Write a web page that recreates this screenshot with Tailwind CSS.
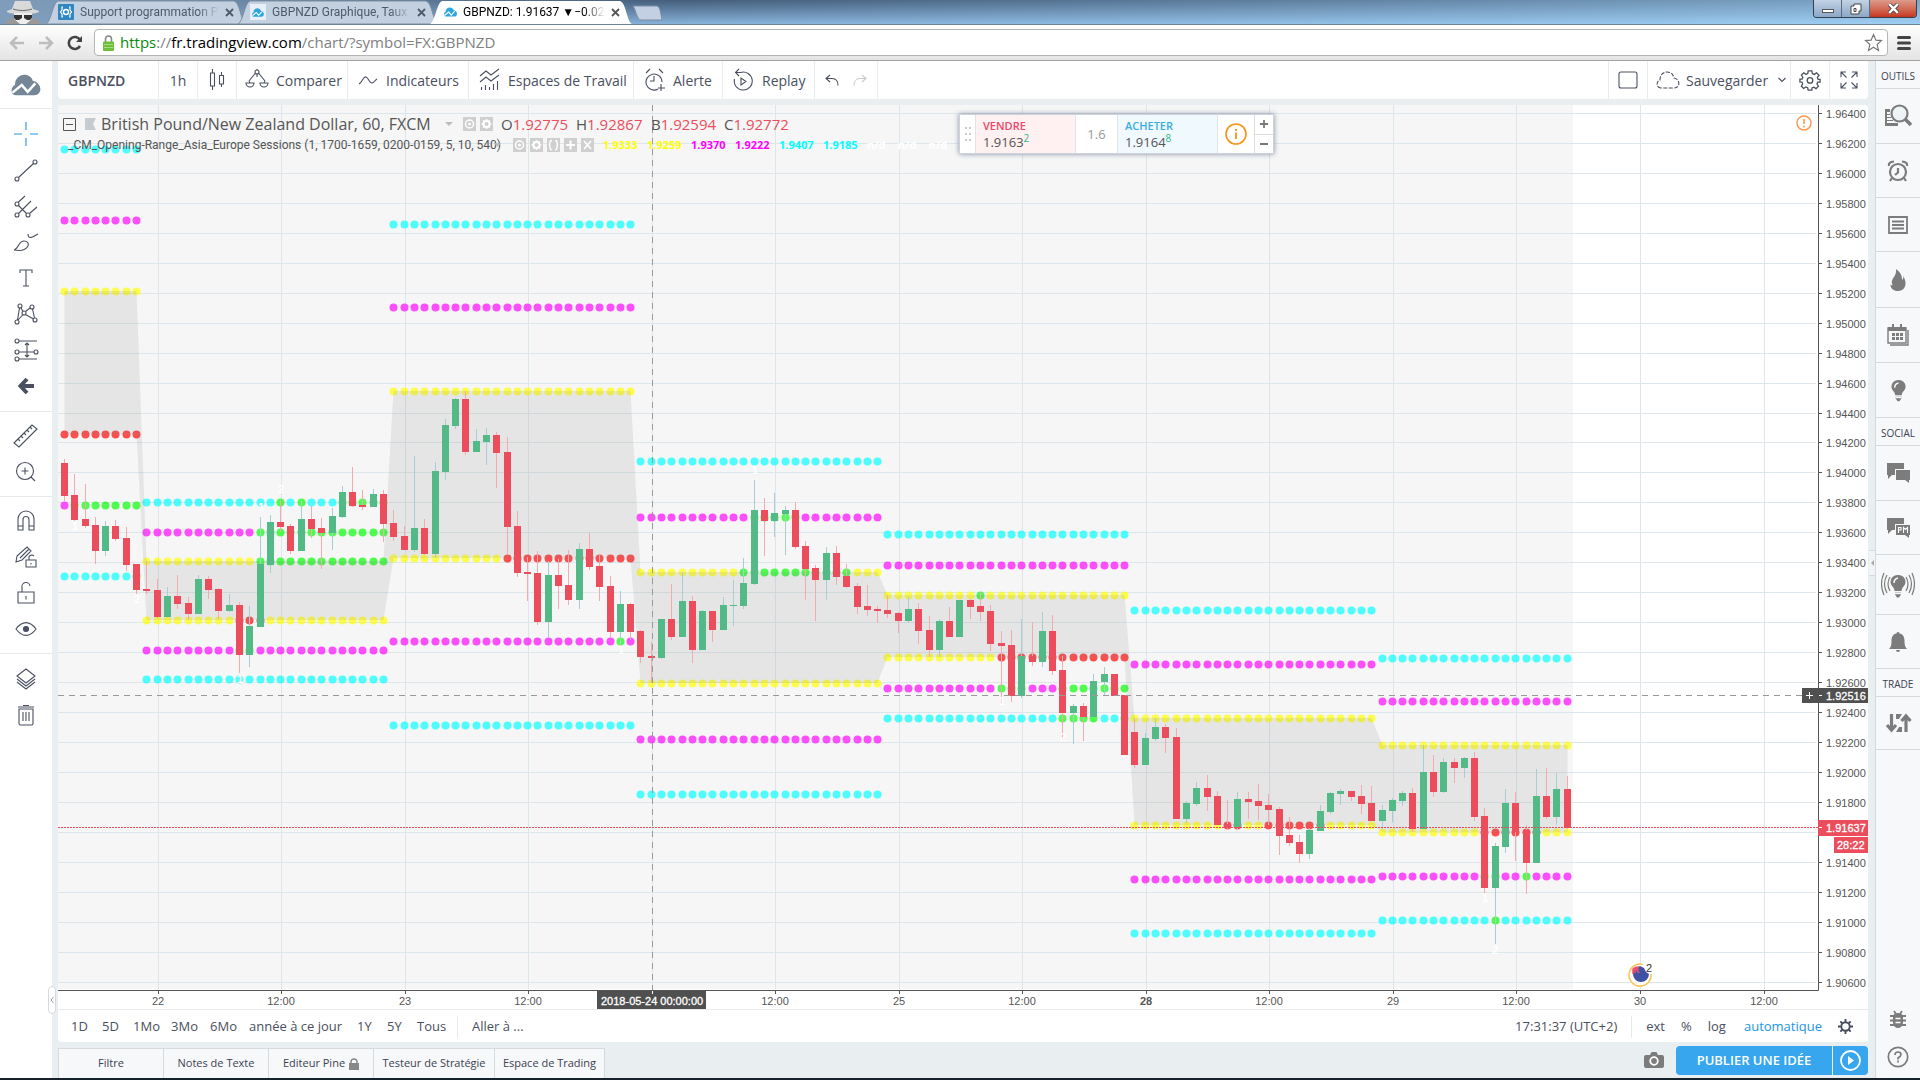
<!DOCTYPE html>
<html lang="fr">
<head>
    <meta charset="UTF-8">
    <meta name="viewport" content="width=device-width, initial-scale=1.0">
    <title>GBPNZD: 1.91637</title>
    <script src="https://cdn.jsdelivr.net/npm/@tailwindcss/browser@4"></script>
</head>
<body class="h-screen flex flex-col overflow-hidden bg-[#e9eef1] font-['Open_Sans','Liberation_Sans',sans-serif] text-[13px] text-[#4a5060]">

    <!-- Icons used more than once -->
    <svg class="hidden">
        <symbol id="cloud" viewBox="0 0 34 26"><path d="M5 25C1 25 0 22 0 19c0-3 2-5 4-6C4 6 9 1 15 1c5 0 9 3 10 7 5 1 9 5 9 10 0 4-3 7-7 7z" fill="currentColor"/><path d="M1 22l11-9 7 8 9-10" fill="none" stroke="#fff" stroke-width="3"/></symbol>
        <symbol id="gear" viewBox="0 0 24 24"><path d="M10 2h4l.6 3 2 .9L19.200 4.200l2.600 2.600L20 9.400l.8 2H23v3h-2.600l-.8 2 1.600 2.400-2.600 2.600-2.400-1.600-2 .8L14 23h-4l-.6-2.600-2-.8L5 21.200l-2.400-2.600L4 16.200l-.8-2L1 14v-3h2.400l.8-2L2.600 6.600l2.600-2.400L7.600 5.800l2-.8z" fill="none" stroke="currentColor" stroke-width="1.4"/><circle cx="12" cy="12.500" r="3" fill="none" stroke="currentColor" stroke-width="1.400"/></symbol>
        <symbol id="bulb" viewBox="0 0 18 24"><path d="M9 1a7 7 0 0 0-7.500 7c0 4 4 5 4 9h7c0-4 4-5 4-9A7 7 0 0 0 9 1zM6 18.500h6v2l-2 3H8l-2-3z" fill="currentColor"/><path d="M5 9c0-3 1.500-4.500 4-5M6 19.500h6" fill="none" stroke="#f7f8fa" stroke-width="1.500"/></symbol>
        <symbol id="mgear" viewBox="0 0 13 14"><path d="M0 0h13v14H0z" fill="#cfcfcf"/><circle cx="6.500" cy="7" r="3" fill="none" stroke="#fff" stroke-width="2"/><path d="M6.500 2v2m0 6v2M1.500 7h2m6 0h2M3 3.500l1.500 1.500m4 4l1.500 1.500m0-7L8.500 5m-4 4L3 10.500" stroke="#fff" stroke-width="1.500"/></symbol>
        <symbol id="meye" viewBox="0 0 13 14"><path d="M0 0h13v14H0z" fill="#cfcfcf"/><circle cx="6.500" cy="7" r="4" fill="none" stroke="#fff" stroke-width="1.500"/><circle cx="6.500" cy="7" r="1.500" fill="#fff"/></symbol>
        <symbol id="close" viewBox="0 0 9 9"><path d="M1 1l7 7M8 1L1 8" stroke="currentColor" stroke-width="1.800"/></symbol>
    </svg>

    <!-- Tab strip -->
    <div class="relative h-6 shrink-0 flex bg-linear-to-b from-[#48617b] to-[#9ccbf2]">
        <div class="absolute inset-0 bg-linear-to-r from-[#7f9dbb] from-0% via-[#35507a]/20 via-35% to-[#9fd0f5]/60 to-100%"></div>
        <svg class="relative w-[46px] h-6 shrink-0" viewBox="0 0 46 24"><path d="M12 9L15 1h15l3 8 6 2c1 2-6 3-16 3S6 13 7 11z" fill="#d9d9d9"/><path d="M13 9c6 2 13 2 19 0" stroke="#666" fill="none"/><path d="M14 13h18v6l-4 5H18l-4-5z" fill="#ededed"/><path d="M14 15h8v3l-3 2h-3l-2-2zm10 0h8v3l-2 2h-3l-3-2z" fill="#333"/><path d="M5 24c1-4 5-6 9-5l6 5zm36 0c-1-4-5-6-9-5l-6 5z" fill="#999"/></svg>
        <div class="relative w-[200px] shrink-0 flex items-center pl-3 pr-3 gap-[6px] font-[Roboto,sans-serif] text-[12px] text-[#4d5a68]">
            <svg class="absolute inset-0 w-full h-full" viewBox="0 0 200 24" preserveAspectRatio="none"><path d="M0 24C5 22 7 2 12 1H188c6 1 7 21 12 23z" fill="#c3d0df" stroke="#7d8fa3"/></svg>
            <svg class="relative w-4 h-4 shrink-0" viewBox="0 0 16 16"><rect width="16" height="16" rx="1" fill="#2f86c1"/><path d="M5 3H4v3L2.500 8 4 10v3h1m6-10h1v3l1.500 2L12 10v3h-1" fill="none" stroke="#fff" stroke-width="1.200"/><circle cx="8" cy="8" r="2.500" fill="none" stroke="#fff" stroke-width="1.400"/></svg>
            <span class="relative flex-1 overflow-hidden whitespace-nowrap mask-r-from-85%">Support programmation P</span>
            <button aria-label="Fermer l'onglet" class="relative"><svg class="size-[9px]"><use href="#close"/></svg></button>
        </div>
        <div class="relative -ml-2 w-[200px] shrink-0 flex items-center pl-3 pr-3 gap-[6px] font-[Roboto,sans-serif] text-[12px] text-[#4d5a68]">
            <svg class="absolute inset-0 w-full h-full" viewBox="0 0 200 24" preserveAspectRatio="none"><path d="M0 24C5 22 7 2 12 1H188c6 1 7 21 12 23z" fill="#c3d0df" stroke="#7d8fa3"/></svg>
            <span class="relative size-4 shrink-0 bg-[#e8eff6] grid place-items-center text-[#2ea7e0]"><svg class="w-3 h-[9px]"><use href="#cloud"/></svg></span>
            <span class="relative flex-1 overflow-hidden whitespace-nowrap mask-r-from-85%">GBPNZD Graphique, Taux</span>
            <button aria-label="Fermer l'onglet" class="relative"><svg class="size-[9px]"><use href="#close"/></svg></button>
        </div>
        <div class="relative -ml-2 w-[202px] shrink-0 flex items-center pl-[14px] pr-3 gap-[6px] font-[Roboto,sans-serif] text-[12px] text-black">
            <svg class="absolute inset-0 w-full h-full" viewBox="0 0 200 24" preserveAspectRatio="none"><path d="M0 24C5 22 7 2 12 1H188c6 1 7 21 12 23z" fill="#fff"/></svg>
            <svg class="relative w-[13px] h-[10px] shrink-0 text-[#2ea7e0]"><use href="#cloud"/></svg>
            <span class="relative flex-1 overflow-hidden whitespace-nowrap mask-r-from-85%">GBPNZD: 1.91637 ▼−0.02</span>
            <button aria-label="Fermer l'onglet" class="relative text-[#555]"><svg class="size-[9px]"><use href="#close"/></svg></button>
        </div>
        <svg class="relative w-8 h-6 shrink-0" viewBox="0 0 32 24"><path d="M1 6h23c3 0 4 2 6 14H9C5 20 4 10 1 6z" fill="#c3cfe2" stroke="#7d8fa3"/></svg>
        <div class="relative ml-auto mr-[3px] flex h-[18px] rounded-b border border-t-0 border-[#33404f] overflow-hidden">
            <button aria-label="Réduire" class="w-7 bg-linear-to-b from-[#c3d3e6] to-[#8da7c5] border-r border-[#5a6b80] grid place-items-center"><span class="w-3 h-1 mt-1 bg-white border border-[#555]"></span></button>
            <button aria-label="Restaurer" class="w-7 bg-linear-to-b from-[#c3d3e6] to-[#8da7c5] border-r border-[#5a6b80] grid place-items-center"><svg class="size-3" viewBox="0 0 12 12"><path d="M4 1h7v7H9v3H1V3h3z" fill="#fff" stroke="#444"/><path d="M4 5.500h2v3H4z" stroke="#444" fill="none"/></svg></button>
            <button aria-label="Fermer" class="w-[46px] bg-linear-to-b from-[#dc9a8c] to-[#c5341c] grid place-items-center"><svg class="size-[11px]" viewBox="0 0 9 9"><path d="M1 1l7 7M8 1L1 8" stroke="#444" stroke-width="3.400"/><path d="M1 1l7 7M8 1L1 8" stroke="#fff" stroke-width="2"/></svg></button>
        </div>
    </div>

    <!-- Address bar -->
    <div class="h-[37px] shrink-0 flex items-center bg-linear-to-b from-white to-[#e4e4e4] border-t border-[#6d8299] border-b border-b-[#a3a3a3] pl-[9px]">
        <button aria-label="Précédent" class="w-[29px] text-[#bdbdbd]"><svg class="size-4" viewBox="0 0 16 16"><path d="M15 8H2m6-6L2 8l6 6" fill="none" stroke="currentColor" stroke-width="2.500"/></svg></button>
        <button aria-label="Suivant" class="w-[29px] text-[#bdbdbd]"><svg class="size-4" viewBox="0 0 16 16"><path d="M1 8h13M8 2l6 6-6 6" fill="none" stroke="currentColor" stroke-width="2.500"/></svg></button>
        <button aria-label="Actualiser" class="w-[27px] text-[#444]"><svg class="size-4" viewBox="0 0 16 16"><path d="M13 11a6 6 0 1 1 0-6" fill="none" stroke="currentColor" stroke-width="2.600"/><path d="M15 1v6H9z" fill="currentColor"/></svg></button>
        <div class="flex-1 h-[27px] bg-white border border-[#b5b5b5] rounded-sm flex items-center pl-2 pr-1">
            <svg class="w-[11px] h-4 shrink-0" viewBox="0 0 11 16"><path d="M2.500 8V4a3 3 0 0 1 6 0v4" fill="none" stroke="#8a8a8a" stroke-width="1.600"/><rect y="6.500" width="11" height="9.500" rx="1" fill="#6fbf3d"/><path d="M1 9.500h9m-9 3h9" stroke="#a5dd80"/></svg>
            <div class="flex-1 ml-[6px] text-[15px] text-[#808080] whitespace-nowrap" role="textbox" aria-label="Adresse"><span class="text-[#0b8a0b]">https</span>://<span class="text-black">fr.tradingview.com</span>/chart/?symbol=FX:GBPNZD</div>
            <button aria-label="Favori"><svg class="size-[19px]" viewBox="0 0 24 24"><path d="M12 2l3 7 7 .6-5.400 5 1.700 7.400L12 18l-6.300 4 1.700-7.400L2 9.600 9 9z" fill="none" stroke="#777" stroke-width="1.500"/></svg></button>
        </div>
        <button aria-label="Menu" class="w-8 grid place-items-center"><svg class="w-[14px] h-4" viewBox="0 0 14 16"><path d="M1.500 2.500h11M1.500 8h11m-11 5.500h11" stroke="#444" stroke-width="3" stroke-linecap="round"/></svg></button>
    </div>

    <div class="flex-1 min-h-0 flex">

        <!-- Drawing tools -->
        <nav class="w-[52px] shrink-0 bg-white flex flex-col [&_button]:h-9 [&_button]:w-full [&_button]:grid [&_button]:place-items-center [&_svg]:fill-none [&_svg]:stroke-[#4a5060] [&_svg]:w-[26px] [&_svg]:h-[26px] [&_svg]:stroke-[1.100]">
            <a href="#" aria-label="Accueil" class="h-12 grid place-items-center border-b border-[#e6eaed] text-[#758696]"><svg class="stroke-none! w-[34px]! h-[22px]!"><use href="#cloud"/></svg></a>
            <div class="py-[7px] border-b border-[#e6eaed]">
                <button aria-label="Curseur"><svg viewBox="0 0 26 26" class="stroke-[#2196e3]!"><path d="M13 1v8m0 8v8M1 13h8m8 0h8"/></svg></button>
                <button aria-label="Ligne de tendance"><svg viewBox="0 0 26 26"><circle cx="4" cy="22" r="2"/><circle cx="22" cy="5" r="2"/><path d="M5.500 20.500L20.500 6.500"/></svg></button>
                <button aria-label="Fourchette"><svg viewBox="0 0 26 26"><circle cx="4" cy="11" r="2"/><circle cx="4" cy="22" r="2"/><circle cx="15" cy="22" r="2"/><path d="M5 9.500L12 3M5.500 12.500l8 8M5.500 20.500L18 8m-1.500 12.500L24 14"/></svg></button>
                <button aria-label="Pinceau"><svg viewBox="0 0 26 26"><path d="M1 21c5-1 4-9 10-9 4 0 5 3 4 5-2 4-8 5-14 4zM15 5c0 6 5 3 10 0"/></svg></button>
                <button aria-label="Texte"><svg viewBox="0 0 26 26"><path d="M7 8V5h12v3M13 5v16m-3 0h6"/></svg></button>
                <button aria-label="Motifs"><svg viewBox="0 0 26 26"><circle cx="7" cy="5" r="2"/><circle cx="19" cy="6" r="2"/><circle cx="4" cy="21" r="2"/><circle cx="22" cy="19" r="2"/><circle cx="11" cy="12" r="2"/><path d="M6.500 7L4.500 19M8 7l2 3.500m2.500 0L17 7m2.500 1l2 9M5 19l5-5.500m2.500 0l8 4.500"/></svg></button>
                <button aria-label="Mesure"><svg viewBox="0 0 26 26"><circle cx="4" cy="4" r="2"/><circle cx="4" cy="15" r="2"/><circle cx="4" cy="22" r="2"/><circle cx="23" cy="15" r="2"/><path d="M6 4h18M6 15h15M6 22h18M14 6v14m-2-12l2-2 2 2m-4 10l2 2 2-2"/></svg></button>
                <button aria-label="Flèche"><svg viewBox="0 0 26 26" class="stroke-[4]!"><path d="M21 13H8m6-7l-6.500 7 6.500 7"/></svg></button>
            </div>
            <div class="py-[6px] border-b border-[#e6eaed]">
                <button aria-label="Règle"><svg viewBox="0 0 26 26"><path d="M1 20L19 2l5 4L6 24zM5 16l2 2m1-5l2 2m1-5l2 2m1-5l2 2m1-5l2 2"/></svg></button>
                <button aria-label="Zoom"><svg viewBox="0 0 26 26"><circle cx="12" cy="12" r="8.500"/><path d="M18 18l4 4M8.500 12h7M12 8.500v7"/></svg></button>
            </div>
            <div class="py-[6px] border-b border-[#e6eaed]">
                <button aria-label="Aimant"><svg viewBox="0 0 26 26"><path d="M5 22V11a8 8 0 0 1 16 0v11h-5V11.500a3 3 0 0 0-6 0V22zm0-4h5m6 0h5"/></svg></button>
                <button aria-label="Mode dessin"><svg viewBox="0 0 26 26"><path d="M3 18l1-6L14 3l4 4-9 9zM7 14l9-9M13 16h10v7H13zM16 16v-3a3 3 0 0 1 5-1M18 19v1.500"/></svg></button>
                <button aria-label="Verrouiller"><svg viewBox="0 0 26 26"><path d="M5 12h16v11H5zM9 12V7a4 4 0 0 1 8-1M13 16v3.500"/></svg></button>
                <button aria-label="Masquer"><svg viewBox="0 0 26 26"><path d="M3 13c6-8.500 14-8.500 20 0-6 8.500-14 8.500-20 0z"/><circle cx="13" cy="13" r="2.500" fill="#4a5060"/></svg></button>
            </div>
            <div class="py-[7px]">
                <button aria-label="Calques"><svg viewBox="0 0 26 26"><path d="M4 10l9-7 9 7-9 7zM4 13l9 7 9-7M4 16l9 7 9-7"/></svg></button>
                <button aria-label="Supprimer"><svg viewBox="0 0 26 26"><path d="M6 7h14v14.500q0 1.500-1.500 1.500h-11Q6 23 6 21.500zM5 5h16M10 3.500h6M10 10v9m3-9v9m3-9v9"/></svg></button>
            </div>
        </nav>

        <div class="relative w-[6px] shrink-0">
            <button aria-label="Replier" class="absolute -left-1 bottom-16 w-2 h-7 bg-white border border-[#d5dade] rounded-full grid place-items-center"><svg class="w-1 h-2" viewBox="0 0 4 8"><path d="M3.500 1L1 4l2.500 3" fill="none" stroke="#999"/></svg></button>
        </div>

        <div class="flex-1 min-w-0 flex flex-col">

            <!-- Chart toolbar -->
            <header class="h-[38px] shrink-0 bg-white rounded-b flex text-[14px] whitespace-nowrap [&_button]:border-r [&_button]:border-[#e9ecef] [&_svg]:fill-none [&_svg]:stroke-[#4a5060] [&_svg]:stroke-[1.100]">
                <button class="w-[101px] pl-[10px] text-left font-semibold">GBPNZD</button>
                <button class="w-[39px]">1h</button>
                <button aria-label="Bougies" class="w-[39px] grid place-items-center"><svg class="w-4 h-6" viewBox="0 0 16 24"><path d="M3.500 1v4m0 13v4M12.500 4v3m0 9v3M1.500 5h4v13h-4zM10.500 7.500h4V16h-4z"/></svg></button>
                <button class="w-[111px] flex items-center gap-[7px] pl-2"><svg class="w-6 h-6" viewBox="0 0 24 24"><circle cx="12" cy="4" r="2"/><path d="M12 1v1m0 4v3M4 13l6.500-8m3 0l6.500 8M1 15h8a4 4 0 0 1-8 0zM15 15h8a4 4 0 0 1-8 0zM5 15l-1-2M20 13l-1 2"/></svg>Comparer</button>
                <button class="w-[121px] flex items-center gap-2 pl-[10px]"><svg class="w-5 h-4" viewBox="0 0 20 16"><path d="M1 12c4-2 4-8 7-7s3 6 6 6c2 0 3-3 5-4"/></svg>Indicateurs</button>
                <button class="w-[165px] flex items-center gap-2 pl-[10px]"><svg class="w-[21px] h-6" viewBox="0 0 21 24"><path d="M1 8l6-5 5 4 8-6M1 14l6-5 5 4 8-6M2.500 22v-3m4 3v-5m4 5v-3m4 3v-6m4 6v-9"/></svg>Espaces de Travail</button>
                <button class="w-[89px] flex items-center gap-2 pl-[11px]"><svg class="w-5 h-6" viewBox="0 0 20 24"><path d="M13 21a8 8 0 1 1 4-7M1 5l4-4m9 0l4 4M9 8v5H5m11 3v7m-3-3h7"/></svg>Alerte</button>
                <button class="w-[92px] flex items-center gap-[9px] pl-[10px]"><svg class="w-5 h-6" viewBox="0 0 20 24"><path d="M1.500 11a9 9 0 1 0 6-6.500H3m3-3.500L2.500 4.500 6 8M8 10v7l5-3.500z"/></svg>Replay</button>
                <div class="w-[63px] flex border-r border-[#e9ecef] [&_button]:border-0! pl-[5px]">
                    <button aria-label="Annuler" class="w-6 grid place-items-center"><svg class="w-[14px] h-3" viewBox="0 0 14 12"><path d="M5 1L1 4.500 5 8M1 4.500h6c4 0 6 3 6 7"/></svg></button>
                    <button aria-label="Rétablir" class="w-8 grid place-items-center opacity-30"><svg class="w-[14px] h-3" viewBox="0 0 14 12"><path d="M9 1l4 3.500L9 8m4-3.500H7c-4 0-6 3-6 7"/></svg></button>
                </div>
                <div class="flex-1 border-r border-[#e9ecef]"></div>
                <button aria-label="Disposition" class="w-[39px] grid place-items-center"><svg class="w-5 h-[18px]" viewBox="0 0 20 18"><rect x="1" y="1" width="18" height="16" rx="2"/></svg></button>
                <button class="w-[143px] flex items-center gap-[6px] pl-2"><svg class="w-6 h-[18px]" viewBox="0 0 24 18" stroke-dasharray="4 1.500"><path d="M5 17c-5 0-5-7-1-8 0-5 3-8 7-8s6 2 7 6c6 1 7 10 0 10z"/></svg>Sauvegarder<svg class="w-2 h-[6px] ml-1" viewBox="0 0 8 6"><path d="M.5 1L4 4.500 7.500 1"/></svg></button>
                <button aria-label="Paramètres" class="w-[39px] grid place-items-center"><svg class="size-[22px]"><use href="#gear"/></svg></button>
                <button aria-label="Plein écran" class="w-[38px] grid place-items-center border-0!"><svg class="w-[18px] h-[18px]" viewBox="0 0 18 18"><path d="M1 6V1h5M1 1l5.500 5.500M12 1h5v5m0-5l-5.500 5.500M1 12v5h5m-5 0l5.500-5.500M12 17h5v-5m0 5l-5.500-5.500"/></svg></button>
            </header>

            <!-- Chart pane -->
            <main class="mt-[6px] flex-1 min-h-0 bg-white rounded flex flex-col overflow-hidden">
                <div class="relative flex-1 min-h-0">
                    <svg id="chart" class="absolute inset-0 w-full h-full font-['Liberation_Sans',Arial,sans-serif] text-[11px]" viewBox="58 105 1810 904" preserveAspectRatio="none"></svg>

                    <div class="absolute left-[5px] top-[7px] whitespace-nowrap text-[#555]">
                        <div class="h-6 flex items-center text-[16px]">
                            <svg class="size-[13px]" viewBox="0 0 13 13"><path d="M.5.5h12v12H.5zM3 6.500h7" fill="none" stroke="#555"/></svg>
                            <svg class="ml-[9px] w-[11px] h-3" viewBox="0 0 11 12"><path d="M0 0h11L8 6l3 6H0z" fill="#c5cbcf"/></svg>
                            <h1 class="ml-[5px] w-[341px] font-medium">British Pound/New Zealand Dollar, 60, FXCM</h1>
                            <svg class="ml-[3px] w-2 h-1" viewBox="0 0 8 4"><path d="M0 0h8L4 4z" fill="#bbb"/></svg>
                            <svg class="ml-[10px] w-[13px] h-[14px]"><use href="#meye"/></svg>
                            <svg class="ml-1 w-[13px] h-[14px]"><use href="#mgear"/></svg>
                            <div class="ml-2 flex text-[15px] [&_b]:font-normal [&_b]:text-[#eb4d5c]">
                                <span class="w-[75px]">O<b>1.92775</b></span>
                                <span class="w-[75px]">H<b>1.92867</b></span>
                                <span class="w-[73px]">B<b>1.92594</b></span>
                                <span>C<b>1.92772</b></span>
                            </div>
                        </div>
                        <div class="h-[18px] pl-[5px] flex items-center text-[12px]">
                            <span class="w-[424px] font-[Roboto,sans-serif]">_CM_Opening-Range_Asia_Europe Sessions (1, 1700-1659, 0200-0159, 5, 10, 540)</span>
                            <svg class="mx-[2px] w-[7px] h-1" viewBox="0 0 8 4"><path d="M0 0h8L4 4z" fill="#bbb"/></svg>
                            <div class="ml-[10px] w-[90px] flex gap-1">
                                <svg class="w-[13px] h-[14px]"><use href="#meye"/></svg>
                                <svg class="w-[13px] h-[14px]"><use href="#mgear"/></svg>
                                <svg class="w-[13px] h-[14px]" viewBox="0 0 13 14"><path d="M0 0h13v14H0z" fill="#cfcfcf"/><path d="M5 2.500q-2 0-2 2T2 7q1 0 1 2.500t2 2M8 2.500q2 0 2 2T11 7q-1 0-1 2.500t-2 2" stroke="#fff" fill="none" stroke-width="1.400"/></svg>
                                <svg class="w-[13px] h-[14px]" viewBox="0 0 13 14"><path d="M0 0h13v14H0z" fill="#cfcfcf"/><path d="M6.500 2.500v9M2 7h9" stroke="#fff" stroke-width="2"/></svg>
                                <svg class="w-[13px] h-[14px]" viewBox="0 0 13 14"><path d="M0 0h13v14H0z" fill="#cfcfcf"/><path d="M3 3l7 8m0-8l-7 8" stroke="#fff" stroke-width="1.600"/></svg>
                            </div>
                            <div class="flex text-[11px] font-bold [&_span]:w-11">
                                <span class="text-[#ffff00]">1.9333</span>
                                <span class="text-[#ffff00]">1.9259</span>
                                <span class="text-[#ff00ff]">1.9370</span>
                                <span class="text-[#ff00ff]">1.9222</span>
                                <span class="text-[#00ffff]">1.9407</span>
                                <span class="text-[#00ffff]">1.9185</span>
                            </div>
                            <div class="flex gap-3 text-[11px] font-bold text-white"><span>n/d</span><span>n/d</span><span>n/d</span></div>
                        </div>
                    </div>

                    <!-- Order ticket -->
                    <div class="absolute left-[901px] top-[9px] h-10 flex bg-white border border-[#ccd3de] shadow-[0_0_5px_rgba(90,100,130,.7)] text-[13px] leading-4 text-[#555]">
                        <div class="w-[15px] grid place-items-center"><svg class="w-[6px] h-4" viewBox="0 0 6 16"><path d="M0 2h2m2 0h2M0 8h2m2 0h2M0 14h2m2 0h2" stroke="#ccc" stroke-width="2"/></svg></div>
                        <button class="w-[101px] pl-[7px] text-left bg-[#fff0f2] border-x border-[#e3e3e8]"><div class="text-[11px] font-semibold text-[#f0476a]">VENDRE</div><div>1.9163<sup class="text-[10px] text-[#2fb887]">2</sup></div></button>
                        <div class="w-[41px] grid place-items-center text-[#999]">1.6</div>
                        <button class="w-[101px] pl-[7px] text-left bg-[#f0f9fd] border-x border-[#e3e3e8]"><div class="text-[11px] font-semibold text-[#3aaee0]">ACHETER</div><div>1.9164<sup class="text-[10px] text-[#2fb887]">8</sup></div></button>
                        <button aria-label="Info" class="w-[36px] grid place-items-center"><svg class="size-[22px]" viewBox="0 0 22 22"><circle cx="11" cy="11" r="10" fill="none" stroke="#f7931a" stroke-width="1.600"/><path d="M11 9.500v6.500M11 6v2" stroke="#f7931a" stroke-width="1.800"/></svg></button>
                        <div class="w-[19px] flex flex-col border-l border-[#ddd]">
                            <button aria-label="Plus" class="flex-1 grid place-items-center border-b border-[#ddd]"><svg class="size-2" viewBox="0 0 8 8"><path d="M4 0v8M0 4h8" stroke="#777" stroke-width="1.800"/></svg></button>
                            <button aria-label="Moins" class="flex-1 grid place-items-center"><svg class="size-2" viewBox="0 0 8 8"><path d="M0 4h8" stroke="#777" stroke-width="1.800"/></svg></button>
                        </div>
                    </div>
                    <svg class="absolute right-14 top-[10px] size-4" viewBox="0 0 16 16"><circle cx="8" cy="8" r="7" fill="none" stroke="#ff9850" stroke-width="1.500"/><path d="M8 4v5m0 1.500v2" stroke="#ff9850" stroke-width="1.600"/></svg>
                </div>

                <div class="h-[33px] shrink-0 border-t border-[#e6eaed] flex items-center pt-px pl-[13px] pr-[15px] whitespace-nowrap">
                    <button class="w-[31px] text-left">1D</button>
                    <button class="w-[31px] text-left">5D</button>
                    <button class="w-[38px] text-left">1Mo</button>
                    <button class="w-[39px] text-left">3Mo</button>
                    <button class="w-[39px] text-left">6Mo</button>
                    <button class="w-[108px] text-left">année à ce jour</button>
                    <button class="w-[30px] text-left">1Y</button>
                    <button class="w-[30px] text-left">5Y</button>
                    <button class="w-[40px] text-left">Tous</button>
                    <button class="h-[22px] border-l border-[#e6eaed] pl-[14px]">Aller à ...</button>
                    <button class="ml-auto pr-[14px] h-[22px] border-r border-[#e6eaed]">17:31:37 (UTC+2)</button>
                    <button class="ml-[14px]">ext</button>
                    <button class="ml-4">%</button>
                    <button class="ml-4">log</button>
                    <button class="ml-[18px] text-[#2196e3]">automatique</button>
                    <button aria-label="Réglages" class="ml-4"><svg class="size-[15px]" viewBox="0 0 16 16"><circle cx="8" cy="8" r="4.500" fill="none" stroke="#454b5a" stroke-width="2"/><path d="M8 0v3m0 10v3M0 8h3m10 0h3M2.500 2.500l2 2m7 7l2 2m0-11l-2 2m-7 7l-2 2" stroke="#454b5a" stroke-width="2"/></svg></button>
                </div>
            </main>

            <!-- Bottom tabs -->
            <footer class="h-9 shrink-0 flex items-end text-[11px] whitespace-nowrap">
                <div class="flex h-[30px] border-t border-l border-[#d5dade] bg-[#f7f8fa] [&_button]:border-r [&_button]:border-[#d5dade] text-[#3c4250]">
                    <button class="w-[105px]">Filtre</button>
                    <button class="w-[105px]">Notes de Texte</button>
                    <button class="w-[105px] flex items-center justify-center gap-1">Editeur Pine <svg class="w-[10px] h-3" viewBox="0 0 10 12"><path d="M2 6V4a3 3 0 0 1 6 0v2" fill="none" stroke="#888" stroke-width="1.400"/><path d="M0 5h10v7H0z" fill="#888"/></svg></button>
                    <button class="w-[121px]">Testeur de Stratégie</button>
                    <button class="w-[110px]">Espace de Trading</button>
                </div>
                <div class="ml-auto h-8 flex">
                    <button aria-label="Capture" class="mr-3 h-7 text-[#7c7c7c]"><svg class="w-5 h-4" viewBox="0 0 20 16"><path d="M2 3h4l1.500-3h5L14 3h4q2 0 2 2v9q0 2-2 2H2q-2 0-2-2V5q0-2 2-2z" fill="currentColor"/><circle cx="10" cy="9" r="3.800" fill="none" stroke="#fff" stroke-width="1.800"/></svg></button>
                    <button class="w-[156px] h-[29px] rounded-l-sm bg-[#37a6ef] text-white text-[13px] font-semibold">PUBLIER UNE IDÉE</button>
                    <button aria-label="Diffuser" class="ml-px w-[35px] h-[29px] rounded-r-sm bg-[#37a6ef] grid place-items-center"><svg class="size-[21px]" viewBox="0 0 21 21"><circle cx="10.500" cy="10.500" r="9.500" fill="none" stroke="#fff" stroke-width="1.800"/><path d="M8 6v9l6-4.500z" fill="#fff"/></svg></button>
                </div>
            </footer>
        </div>

        <div class="relative w-[7px] shrink-0"><button aria-label="Replier" class="absolute left-px right-0 top-[489px] h-[26px] border-y border-[#d5dade] bg-[#f1f4f6] grid place-items-center"><svg class="w-[3px] h-[6px]" viewBox="0 0 3 6"><path d="M3 0v6L0 3z" fill="#aaa"/></svg></button></div>

        <!-- Widgets -->
        <aside class="w-[45px] shrink-0 bg-[#f7f8fa] border-l border-[#d5dade] flex flex-col text-[#7c7c7c] [&_h2]:text-[10px] [&_h2]:text-[#3c4250] [&_h2]:grid [&_h2]:place-items-center [&_h2]:border-b [&_h2]:border-[#d5dade] [&_h2]:h-7 [&_h2]:pt-[3px] [&_button]:grid [&_button]:place-items-center">
            <h2>OUTILS</h2>
            <button aria-label="Liste de suivi" class="h-[55px] border-b border-[#d5dade]"><svg class="w-7 h-6" viewBox="0 0 28 24"><path d="M1 5h5v3H3v2h3v1H3v2h4v1H3v2h6v1H3v2h11v3H1z" fill="currentColor"/><circle cx="15.500" cy="9.500" r="8" fill="#eef3f6" stroke="currentColor" stroke-width="2.200"/><path d="M21 15l6 6" stroke="currentColor" stroke-width="3.500"/></svg></button>
            <button aria-label="Alertes" class="h-[54px] border-b border-[#d5dade]"><svg class="size-[22px]" viewBox="0 0 22 22"><circle cx="11" cy="12" r="8" fill="none" stroke="currentColor" stroke-width="2.200"/><path d="M11 8v4.500L8 15M2 6q-1-4 5-4.500M20 6q1-4-5-4.500M5 18l-2 3m14-3l2 3" fill="none" stroke="currentColor" stroke-width="2.200"/></svg></button>
            <button aria-label="Actualités" class="h-[54px] border-b border-[#d5dade]"><svg class="w-5 h-[18px]" viewBox="0 0 20 18"><path d="M1 1h18v16H1zM4 5.500h12M4 9h12M4 12.500h12" fill="none" stroke="currentColor" stroke-width="1.800"/></svg></button>
            <button aria-label="Tendances" class="h-[56px] border-b border-[#d5dade]"><svg class="w-4 h-[22px]" viewBox="0 0 16 22"><path d="M6 0c4 3 6 6 6 11 1-1 1.500-2 1.500-4 1 3 2 4.500 2 7.500 0 4.500-3 7.500-7.500 7.500S.5 19.500.5 15.500c1 1 1.500 1 2 .5-1-2-1-4 .5-6.500S6.500 5 6 0z" fill="currentColor"/></svg></button>
            <button aria-label="Calendrier" class="h-[55px] border-b border-[#d5dade]"><svg class="w-[22px] h-[22px]" viewBox="0 0 22 22"><path d="M1 4h18v15H1zM3 21h18V6" fill="none" stroke="currentColor" stroke-width="1.400"/><path d="M1 3h18v4H1zM5 0h2v4H5zm8 0h2v4h-2zM5 9h3v3H5zm4 0h3v3H9zm4 0h3v3h-3zm-8 4h3v3H5zm4 0h3v3H9zm4 0h3v3h-3z" fill="currentColor"/></svg></button>
            <button aria-label="Mes idées" class="h-[55px] border-b border-[#d5dade]"><svg class="w-[17px] h-[23px]"><use href="#bulb"/></svg></button>
            <h2>SOCIAL</h2>
            <button aria-label="Chat public" class="h-[55px] border-b border-[#d5dade]"><svg class="w-[23px] h-5" viewBox="0 0 23 20"><path d="M0 0h17v6H8v6H5l-4 4v-4H0zM9 7h14v10h-1v3l-4-3H9z" fill="currentColor"/></svg></button>
            <button aria-label="Messages" class="h-[54px] border-b border-[#d5dade]"><svg class="w-[23px] h-5" viewBox="0 0 23 20"><path d="M0 0h17v6H8v6H5l-4 4v-4H0zM9 7h14v10h-1v3l-4-3H9z" fill="currentColor"/><path d="M11.500 15V9.500H14V12h-2.500M16.500 15V9.500l2 2 2-2V15" fill="none" stroke="#fff" stroke-width="1.100"/></svg></button>
            <button aria-label="Flux d'idées" class="h-[60px] border-b border-[#d5dade] grid-flow-col justify-center"><svg class="w-[34px] h-7" viewBox="0 0 34 28"><path d="M9 6q-4 7 0 14M6 4q-5 9 0 18M3 2q-5 11 0 22M25 6q4 7 0 14M28 4q5 9 0 18M31 2q5 11 0 22" fill="none" stroke="currentColor" stroke-width="1.200"/><use href="#bulb" x="8" y="3" width="18" height="24"/></svg></button>
            <button aria-label="Notifications" class="h-[54px] border-b border-[#d5dade]"><svg class="w-[18px] h-5" viewBox="0 0 18 20"><path d="M9 0c1 0 1.500 1 1.500 1.500C14 2 15.500 5 15.500 9c0 4 .5 6 2.500 8H0c2-2 2.500-4 2.500-8 0-4 1.500-7 5-7.500C7.500 1 8 0 9 0zM7 18h4q0 2-2 2t-2-2z" fill="currentColor"/></svg></button>
            <h2>TRADE</h2>
            <button aria-label="Ordres" class="h-[53px] border-b border-[#d5dade]"><svg class="w-[27px] h-5" viewBox="0 0 27 20"><path d="M6.500 1v15M2 12l4.500 5 4.500-5M21 19V4m-4.500 4L21 3l4.500 5" fill="none" stroke="currentColor" stroke-width="3.200"/><path d="M11 1h6l-3 5h-3zM17 19h-6l3-5h3z" fill="currentColor"/></svg></button>
            <button aria-label="Signaler un bug" class="mt-auto mb-[18px]"><svg class="w-4 h-[18px]" viewBox="0 0 16 18"><path d="M3 6q1-3 5-3t5 3v7q-1 5-5 5t-5-5z" fill="currentColor"/><path d="M4 1l2 3m6-3l-2 3M0 6h16M0 10.500h16M0 15h16" stroke="currentColor" stroke-width="1.800"/><path d="M5.500 8.500h5m-5 4h5" stroke="#fff" stroke-width="1.500"/></svg></button>
            <button aria-label="Aide" class="mb-[10px]"><svg class="size-[22px]" viewBox="0 0 22 22"><circle cx="11" cy="11" r="9.700" fill="none" stroke="currentColor" stroke-width="1.700"/><path d="M8 9q0-3 3-3t3 2.500q0 1.500-3 3.500v1.500m0 1v2" fill="none" stroke="currentColor" stroke-width="1.700"/></svg></button>
        </aside>
    </div>

    <div class="h-[2px] shrink-0 bg-[#17212b]"></div>

    <script>
        // Bars, one per hour: direction (1 = up), high, top of body, bottom of body, low
        const bars = [
            [0,459,463,496,501],[0,474,495,520,521],[0,484,519,526,528],[0,517,525,551,564],[1,521,526,551,556],[0,520,526,539,541],[0,527,538,565,571],[0,564,564,590,594],
            [0,561,589,591,594],[0,579,590,617,618],[1,587,596,617,617],[0,575,596,604,609],[0,597,603,614,620],[1,575,579,614,614],[0,576,579,590,599],[0,588,589,611,619],
            [1,594,605,611,612],[0,602,605,655,673],[1,606,626,655,667],[1,517,564,627,627],[1,515,522,565,573],[0,500,522,527,532],[0,524,526,551,554],[1,501,519,551,551],
            [0,506,519,529,538],[0,518,528,533,569],[1,508,516,533,550],[1,486,492,517,518],[0,467,492,506,507],[0,490,505,507,510],[1,489,494,507,507],[0,490,494,524,542],
            [0,510,523,537,541],[0,526,536,550,550],[1,456,528,550,552],[0,519,528,554,555],[1,462,471,554,558],[1,419,425,472,480],[1,398,399,426,429],[0,391,399,452,455],
            [1,429,441,452,452],[1,428,435,442,465],[0,432,435,453,488],[0,437,452,527,555],[0,511,526,573,577],[0,557,572,574,601],[0,551,573,622,625],[1,561,575,622,637],
            [0,559,575,586,609],[0,550,585,600,605],[1,543,549,600,609],[0,533,549,567,570],[0,555,566,587,601],[0,576,586,632,637],[1,591,604,632,645],[0,603,604,632,640],
            [0,630,631,657,663],[0,642,656,658,683],[1,619,619,658,659],[0,584,619,637,640],[1,572,601,637,637],[0,596,601,650,663],[1,610,611,650,650],[0,611,611,630,642],
            [1,597,605,630,630],[1,580,605,606,626],[1,558,583,606,609],[1,480,510,584,585],[0,498,510,521,556],[1,493,513,521,537],[1,506,510,514,555],[0,502,510,547,549],
            [0,541,546,569,600],[0,565,568,580,621],[1,547,553,580,600],[0,546,553,577,585],[0,564,576,587,588],[0,583,586,607,614],[0,585,606,610,616],[0,606,609,611,623],
            [0,595,610,614,618],[0,612,613,621,633],[1,597,609,621,623],[0,603,609,631,644],[0,616,630,650,657],[1,619,621,650,657],[0,607,621,637,637],[1,600,600,637,637],
            [0,599,600,607,619],[0,592,606,612,621],[0,605,611,644,651],[0,631,643,646,705],[0,630,645,696,702],[1,619,656,696,698],[0,622,656,662,666],[1,612,631,662,667],
            [0,615,631,671,675],[0,656,670,713,741],[1,704,706,713,744],[0,703,706,717,741],[1,674,681,717,717],[1,667,674,682,696],[0,674,674,696,696],[0,695,695,755,755],
            [0,718,732,765,768],[1,733,738,765,765],[1,718,727,739,741],[0,724,727,738,753],[0,728,737,819,819],[1,801,803,819,823],[1,782,788,804,806],[0,775,788,797,811],
            [0,791,796,825,825],[0,800,824,828,829],[1,792,799,827,830],[0,792,799,802,819],[0,784,801,806,820],[0,794,805,810,825],[0,807,809,836,855],[0,817,835,843,846],
            [0,835,842,854,863],[1,828,830,854,859],[1,805,811,831,831],[1,792,793,812,814],[1,789,791,794,805],[0,791,791,797,801],[0,785,796,804,814],[0,786,803,821,821],
            [1,805,810,821,829],[1,798,800,811,822],[1,791,793,801,806],[0,788,793,829,832],[1,745,772,829,829],[0,755,772,792,797],[1,758,762,792,793],[0,758,762,768,783],
            [1,757,758,768,778],[0,752,758,817,821],[0,808,816,888,893],[1,843,846,888,944],[1,789,803,847,853],[0,792,803,832,861],[0,825,830,863,894],[1,769,796,863,863],
            [0,768,796,817,819],[1,773,789,817,825],[0,776,789,828,829]
        ];

        const C = '#00ffff', M = '#ff00ff', Y = '#ffff00', R = '#ff0000', G = '#00ff00';

        // Sessions: first bar, last bar, then levels [y, colour, recoloured bars [from, to, colour]...]
        const sessions = [
            [0, 7, [[149,C],[220,M],[291,Y],[434,R],[505,M,[1,7,G]],[576,C,[7,7,G]]]],
            [8, 31, [[502,C,[21,21,G],[23,23,G],[27,31,G]],[532,M,[19,31,G]],[561,Y,[19,31,G]],[620,Y,[17,19,R]],[650,M,[17,18,G]],[679,C]]],
            [32, 55, [[224,C],[307,M],[391,Y],[558,Y,[43,55,R]],[641,M,[54,54,G]],[725,C]]],
            [56, 79, [[461,C],[517,M,[67,71,G]],[572,Y,[66,76,G]],[683,Y],[739,M],[794,C]]],
            [80, 103, [[534,C],[565,M],[595,Y,[89,89,G]],[657,Y,[91,103,R]],[688,M,[91,93,G],[97,103,G]],[718,C,[97,100,G],[103,103,G]]]],
            [104, 127, [[610,C],[664,M],[718,Y],[825,Y,[113,114,R],[117,122,R]],[879,M],[933,C]]],
            [128, 146, [[658,C],[701,M],[745,Y],[832,Y,[138,143,R]],[876,M,[138,139,G],[142,142,G]],[920,C,[139,139,G]]]]
        ];

        const marks = [[75,526,1],[137,599,2],[240,679,1],[261,507,1],[281,489,2],[755,470,1],[621,650,1],[1002,701,1],[1063,737,2],[1485,898,1],[1495,950,2]];
        const days = [[158,'22'],[281,'12:00'],[405,'23'],[528,'12:00'],[652,''],[775,'12:00'],[899,'25'],[1022,'12:00'],[1146,'28'],[1269,'12:00'],[1393,'29'],[1516,'12:00'],[1640,'30'],[1764,'12:00']];

        const barX = i => Math.floor(64.5 + i * 10.293) + 0.5;
        let s = '<rect x="58" y="105" width="1515" height="884" fill="#f6f6f6"/>';

        // Grid and axes
        let labels = '';
        for (let i = 0; i < 30; i++) {
            const y = Math.floor(113.3 + i * 29.97) + 0.5;
            s += `<path d="M58 ${y}H1816" stroke="#dce6eb"/>`;
            // 1.91600 lies behind the last price label
            if (i !== 24) labels += `<path d="M1818 ${y}h4" stroke="#555"/><text x="1826" y="${y + 4}">${(1.964 - i * 0.002).toFixed(5)}</text>`;
        }
        for (const [x, t] of days) {
            s += `<path d="M${x + 0.5} 105V989" stroke="#dce6eb"/>`;
            labels += `<path d="M${x + 0.5} 991v3" stroke="#555"/><text x="${x}" y="1005" text-anchor="middle"${t === '28' ? ' font-weight="bold"' : ''}>${t}</text>`;
        }

        // Level dots
        const upper = [], lower = [];
        for (const [a, b, levels] of sessions) {
            for (const [y, base, ...over] of levels) {
                for (let i = a; i <= b; i++) {
                    const o = over.find(r => i >= r[0] && i <= r[1]);
                    s += `<circle cx="${barX(i)}" cy="${y + 0.5}" r="4" fill="${o ? o[2] : base}" opacity=".68"/>`;
                }
            }
            upper.push([barX(a), levels[2][0]], [barX(b), levels[2][0]]);
            lower.unshift([barX(b), levels[3][0]], [barX(a), levels[3][0]]);
        }
        s += `<polygon points="${upper.concat(lower).join(' ')}" fill="#808080" opacity=".14"/>`;

        bars.forEach(([up, h, t, b, l], i) => {
            const x = barX(i);
            s += `<path d="M${x} ${h}V${l}" stroke="${up ? '#a9cdd3' : '#f7a9b1'}"/>`;
            s += `<rect x="${x - 3.5}" y="${t}" width="7" height="${b - t}" fill="${up ? '#53b987' : '#eb4d5c'}"/>`;
        });
        for (const [x, y, n] of marks) s += `<text x="${x}" y="${y + 4}" text-anchor="middle" fill="#fff" font-weight="bold">${n}</text>`;

        // Crosshair and last price
        s += '<path d="M58 695.500H1802M652.500 105V991" stroke="#999" stroke-dasharray="6 5" fill="none"/>';
        s += '<path d="M58 827.500H1818" stroke="#eb4d5c" stroke-dasharray="2 1"/>';
        s += '<path d="M58 990.500H1818.500V105" stroke="#555" fill="none"/>';
        s += `<g fill="#555">${labels}</g>`;
        s += '<path d="M1802 688h16v15h-16zM1819 688h49v15h-49z" fill="#505050"/><path d="M1818.500 688v15" stroke="#505050"/><path d="M1806 695.500h7m-3.500-3.500v7M1819 695.500h3" stroke="#fff"/>';
        s += '<path d="M1818 820h50v16h-50zM1834 837h34v16h-34z" fill="#eb4d5c"/><path d="M1819 827.500h3" stroke="#fff"/>';
        s += '<path d="M597 991h109v18H597z" fill="#505050"/><path d="M652.500 991v3" stroke="#fff"/>';
        s += '<g fill="#fff" stroke="#fff" stroke-width=".3"><text x="1826" y="700">1.92516</text><text x="1826" y="832">1.91637</text><text x="1837" y="849">28:22</text><text x="601" y="1005">2018-05-24 00:00:00</text></g>';

        // Economic event
        s += '<circle cx="1640" cy="975" r="11" fill="#fff"/><path d="M1643 964.500A11 11 0 1 0 1651 974" fill="none" stroke="#fbc456" stroke-width="1.600"/><path d="M1633 970l7-4 4 2 2 4 3 2a8 8 0 1 1-16 0z" fill="#3f51a5"/><path d="M1633 974v-5q2-2 6-2M1635 973v-4h4m-3 0l3 4" fill="none" stroke="#f0506a" stroke-width="1.500"/><text x="1646" y="972" fill="#333">2</text>';

        document.getElementById('chart').innerHTML = s;
    </script>
</body>
</html>
